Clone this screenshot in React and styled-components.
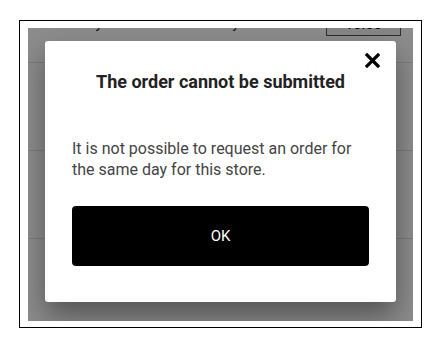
import React from 'react'
import styled, { createGlobalStyle } from 'styled-components'

const GlobalStyle = createGlobalStyle`
  html, body {
    margin: 0;
    padding: 0;
    background: #ffffff;
    font-family: Roboto, "Liberation Sans", sans-serif;
  }
`

export default function App() {
  return (
    <>
      <GlobalStyle />
      <Page>
        <Frame>
          <Viewport>
            <Screen>
              <TopRow>
                <RowText>Delivery date</RowText>
                <RowText>Monday</RowText>
                <TimeBox>10:00</TimeBox>
              </TopRow>
              <Row />
              <Row />
              <Row />
            </Screen>
            <Overlay>
              <Modal>
                <CloseButton aria-label="Close">
                  <svg width="15" height="15" viewBox="0 0 15 15">
                    <path d="M2 2 L13 13 M13 2 L2 13" stroke="#000" strokeWidth="3.2" strokeLinecap="square" />
                  </svg>
                </CloseButton>
                <Title>The order cannot be submitted</Title>
                <Message>It is not possible to request an order for the same day for this store.</Message>
                <OkButton>OK</OkButton>
              </Modal>
            </Overlay>
          </Viewport>
        </Frame>
      </Page>
    </>
  )
}

const Page = styled.div`
  padding: 20px 19px;
`

const Frame = styled.div`
  width: 385px;
  border: 1px solid #000;
  padding: 7px 8px 6px 8px;
`

const Viewport = styled.div`
  position: relative;
  height: 293px;
  overflow: hidden;
`

const Screen = styled.div`
  display: flex;
  flex-direction: column;
  margin-top: -20px;
  background: #fff;
  height: 330px;
`

const TopRow = styled.div`
  display: flex;
  align-items: flex-start;
  gap: 30px;
  height: 55px;
  padding: 4px 12px 0 22px;
  box-sizing: border-box;
  border-bottom: 1px solid #e2e2e2;
  flex-shrink: 0;
`

const RowText = styled.span`
  font-size: 15px;
  line-height: 22px;
  color: #222;
  &:nth-child(2) {
    margin-left: 20px;
  }
`

const TimeBox = styled.span`
  margin-left: auto;
  border: 1px solid #555;
  background: #f4f4f4;
  padding: 0 18px;
  font-size: 15px;
  line-height: 22px;
`

const Row = styled.div`
  height: 87px;
  flex-shrink: 0;
  border-bottom: 1px solid #e2e2e2;
`

const Overlay = styled.div`
  position: absolute;
  inset: 0;
  background: rgba(0, 0, 0, 0.45);
  display: flex;
  justify-content: center;
  align-items: flex-start;
  padding-top: 13px;
`

const Modal = styled.div`
  position: relative;
  width: 351px;
  box-sizing: border-box;
  background: #fff;
  border-radius: 3px;
  padding: 30px 27px 36px;
  box-shadow: 0 14px 28px rgba(0, 0, 0, 0.4);
  display: flex;
  flex-direction: column;
`

const CloseButton = styled.button`
  position: absolute;
  top: 12px;
  right: 16px;
  border: none;
  background: none;
  padding: 0;
  display: flex;
  cursor: pointer;
`

const Title = styled.h2`
  margin: 0;
  text-align: center;
  font-size: 18px;
  line-height: 21px;
  font-weight: 700;
  color: #222;
`

const Message = styled.p`
  margin: 46px 0 26px;
  font-size: 16px;
  line-height: 21px;
  color: #444;
`

const OkButton = styled.button`
  height: 60px;
  border: none;
  border-radius: 4px;
  background: #000;
  color: #fff;
  font-family: Roboto, "Liberation Sans", sans-serif;
  font-size: 15px;
  cursor: pointer;
`
